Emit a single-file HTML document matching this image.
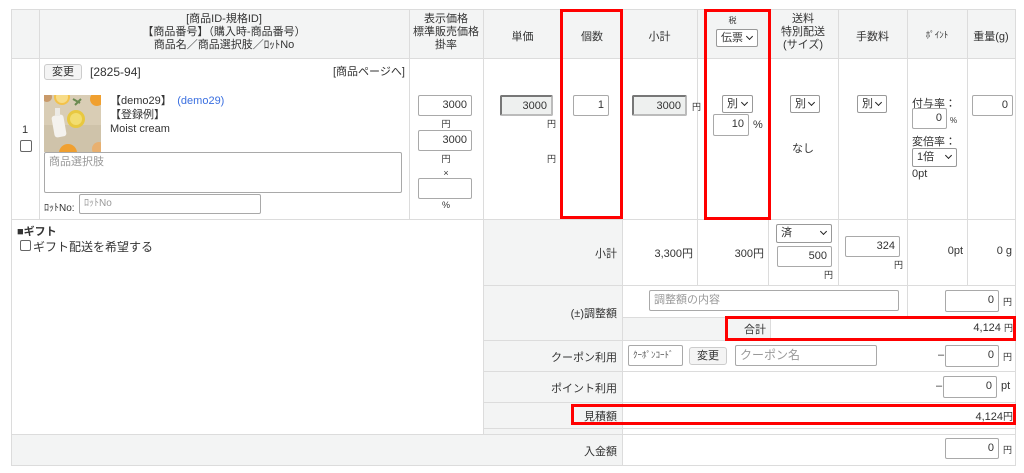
<!DOCTYPE html>
<html><head><meta charset="utf-8"><style>
*{box-sizing:border-box;margin:0;padding:0}
body{width:1024px;height:473px;background:#fff;position:relative;overflow:hidden;font-family:"Liberation Sans","Noto Sans CJK JP",sans-serif;font-size:11px;color:#333}
.a{position:absolute}
.hl{position:absolute;height:1px;background:#dcdcdc}
.vl{position:absolute;width:1px;background:#dcdcdc}
.g{position:absolute;background:#f3f4f4}
.i{position:absolute;border:1px solid #a9a9a9;border-radius:2px;background:#fff;text-align:right;padding:2px 4px 0 0;font-size:11px;line-height:14px}
.ro{background:#eef0ef;border:2px solid #777;border-right-color:#bbb;border-bottom-color:#bbb}
.s{position:absolute;border:1px solid #999;border-radius:2px;background:#fff;font-size:11px;padding:1px 0 0 4px;line-height:14px}
.s:after{content:"";position:absolute;right:5px;top:4px;width:4px;height:4px;border-right:1.5px solid #222;border-bottom:1.5px solid #222;transform:rotate(45deg)}
.ph{color:#999;text-align:left;padding-left:4px}
.c{text-align:center}
.btn{position:absolute;border:1px solid #ccc;border-radius:3px;background:#f4f4f4;text-align:center;line-height:14px;font-size:11px}
.rb{position:absolute;border:3px solid #f00}
.t{position:absolute;white-space:nowrap}
</style></head><body>
<div class="g" style="left:11px;top:9px;width:1005px;height:50px"></div>
<div class="g" style="left:483px;top:219px;width:139px;height:215px"></div>
<div class="g" style="left:622px;top:317px;width:148px;height:23px"></div>
<div class="g" style="left:11px;top:434px;width:611px;height:31px"></div>
<div class="hl" style="left:11px;top:9px;width:1005px"></div>
<div class="hl" style="left:11px;top:58px;width:1005px"></div>
<div class="hl" style="left:11px;top:219px;width:1005px"></div>
<div class="hl" style="left:483px;top:285px;width:533px"></div>
<div class="hl" style="left:622px;top:317px;width:394px"></div>
<div class="hl" style="left:483px;top:340px;width:533px"></div>
<div class="hl" style="left:483px;top:371px;width:533px"></div>
<div class="hl" style="left:483px;top:402px;width:533px"></div>
<div class="hl" style="left:483px;top:428px;width:533px"></div>
<div class="hl" style="left:11px;top:434px;width:1005px"></div>
<div class="hl" style="left:11px;top:465px;width:1005px"></div>
<div class="vl" style="left:11px;top:9px;height:457px"></div>
<div class="vl" style="left:1015px;top:9px;height:457px"></div>
<div class="vl" style="left:39px;top:9px;height:210px"></div>
<div class="vl" style="left:409px;top:9px;height:210px"></div>
<div class="vl" style="left:483px;top:9px;height:425px"></div>
<div class="vl" style="left:562px;top:9px;height:210px"></div>
<div class="vl" style="left:622px;top:9px;height:457px"></div>
<div class="vl" style="left:697px;top:9px;height:276px"></div>
<div class="vl" style="left:768px;top:9px;height:276px"></div>
<div class="vl" style="left:838px;top:9px;height:276px"></div>
<div class="vl" style="left:907px;top:9px;height:308px"></div>
<div class="vl" style="left:967px;top:9px;height:276px"></div>
<div class="vl" style="left:770px;top:317px;height:23px"></div>
<div class="t c" style="left:39px;top:13px;width:370px;line-height:13px">[商品ID-規格ID]<br>【商品番号】（購入時-商品番号）<br>商品名／商品選択肢／ﾛｯﾄNo</div>
<div class="t c" style="left:409px;top:13px;width:74px;line-height:13px">表示価格<br>標準販売価格<br>掛率</div>
<div class="t c" style="left:483px;top:28px;width:79px">単価</div>
<div class="t c" style="left:562px;top:28px;width:60px">個数</div>
<div class="t c" style="left:622px;top:28px;width:75px">小計</div>
<div class="t c" style="left:697px;top:15px;width:71px;font-size:8px">税</div>
<div class="s" style="left:716px;top:29px;width:42px;height:18px">伝票</div>
<div class="t c" style="left:768px;top:13px;width:70px;line-height:13px">送料<br>特別配送<br>(サイズ)</div>
<div class="t c" style="left:838px;top:28px;width:69px">手数料</div>
<div class="t c" style="left:907px;top:28px;width:60px;font-size:9px">ﾎﾟｲﾝﾄ</div>
<div class="t c" style="left:967px;top:28px;width:48px">重量(g)</div>
<div class="t" style="left:22px;top:124px">1</div>
<div class="a" style="left:20px;top:140px;width:12px;height:12px;border:1px solid #666;border-radius:2px"></div>
<div class="btn" style="left:44px;top:64px;width:38px;height:16px">変更</div>
<div class="t" style="left:90px;top:65px;font-size:12px">[2825-94]</div>
<div class="t" style="left:333px;top:63px">[商品ページへ]</div>
<svg class="a" style="left:44px;top:95px" width="57" height="57" viewBox="0 0 57 57">
<rect width="57" height="57" fill="#d9cdb5"/>
<rect x="0" y="30" width="57" height="27" fill="#cfc3aa"/>
<circle cx="18" cy="2" r="8" fill="#f3c24a"/><circle cx="18" cy="2" r="6" fill="#f7dc88"/>
<circle cx="53" cy="4" r="7" fill="#f0a030"/>
<circle cx="3" cy="2" r="5" fill="#c99a6a"/>
<circle cx="32" cy="24" r="9" fill="#e8c840"/><circle cx="32" cy="24" r="6" fill="#f2dd70"/>
<rect x="9" y="20" width="12" height="22" rx="3" fill="#f4f2ee" transform="rotate(-10 15 31)"/>
<rect x="11" y="13" width="5" height="8" fill="#eceae5"/>
<circle cx="24" cy="58" r="9" fill="#f0a030"/>
<circle cx="55" cy="54" r="7" fill="#e8b070"/>
<path d="M29 4 L36 8 M31 10 L37 4" stroke="#6b8a50" stroke-width="2"/>
</svg>
<div class="t" style="left:110px;top:94px;line-height:14px">【demo29】　<span style="color:#3a6fe0">(demo29)</span><br>【登録例】<br>Moist cream</div>
<div class="i ph" style="left:44px;top:152px;width:358px;height:41px;color:#999">商品選択肢</div>
<div class="t" style="left:44px;top:199px;font-size:10px">ﾛｯﾄNo:</div>
<div class="i ph" style="left:79px;top:194px;width:182px;height:20px;font-size:10px">ﾛｯﾄNo</div>
<div class="i" style="left:418px;top:95px;width:54px;height:21px">3000</div>
<div class="t c" style="left:409px;top:117px;width:74px;font-size:9px">円</div>
<div class="i" style="left:418px;top:130px;width:54px;height:21px">3000</div>
<div class="t c" style="left:409px;top:152px;width:74px;font-size:9px;line-height:14px">円<br>×</div>
<div class="i" style="left:418px;top:178px;width:54px;height:21px"></div>
<div class="t c" style="left:409px;top:200px;width:74px;font-size:9px">%</div>
<div class="i ro" style="left:500px;top:95px;width:53px;height:21px">3000</div>
<div class="t" style="left:547px;top:117px;font-size:9px">円</div>
<div class="t" style="left:547px;top:152px;font-size:9px">円</div>
<div class="i" style="left:573px;top:95px;width:36px;height:21px">1</div>
<div class="i ro" style="left:632px;top:95px;width:55px;height:21px">3000</div>
<div class="t" style="left:692px;top:100px;font-size:9px">円</div>
<div class="s" style="left:722px;top:95px;width:31px;height:18px">別</div>
<div class="i" style="left:713px;top:114px;width:36px;height:22px">10</div>
<div class="t" style="left:753px;top:119px">%</div>
<div class="s" style="left:790px;top:95px;width:30px;height:18px">別</div>
<div class="t c" style="left:768px;top:140px;width:70px">なし</div>
<div class="s" style="left:857px;top:95px;width:30px;height:18px">別</div>
<div class="t" style="left:912px;top:95px">付与率：</div>
<div class="i" style="left:912px;top:108px;width:35px;height:21px">0</div>
<div class="t" style="left:950px;top:116px;font-size:8px">%</div>
<div class="t" style="left:912px;top:133px">変倍率：</div>
<div class="s" style="left:912px;top:148px;width:45px;height:19px">1倍</div>
<div class="t" style="left:912px;top:168px">0pt</div>
<div class="i" style="left:972px;top:95px;width:41px;height:21px">0</div>
<div class="rb" style="left:560px;top:9px;width:63px;height:210px"></div>
<div class="rb" style="left:704px;top:9px;width:67px;height:211px"></div>
<div class="t" style="left:17px;top:223px;font-weight:bold">■ギフト</div>
<div class="a" style="left:20px;top:240px;width:11px;height:11px;border:1px solid #666;border-radius:2px"></div>
<div class="t" style="left:33px;top:238px;font-size:12px">ギフト配送を希望する</div>
<div class="t" style="left:483px;top:245px;width:134px;text-align:right">小計</div>
<div class="t" style="left:622px;top:245px;width:71px;text-align:right">3,300円</div>
<div class="t" style="left:697px;top:245px;width:67px;text-align:right">300円</div>
<div class="s" style="left:776px;top:224px;width:56px;height:19px">済</div>
<div class="i" style="left:777px;top:246px;width:55px;height:21px">500</div>
<div class="t" style="left:824px;top:268px;font-size:9px">円</div>
<div class="i" style="left:845px;top:236px;width:55px;height:21px">324</div>
<div class="t" style="left:894px;top:258px;font-size:9px">円</div>
<div class="t" style="left:907px;top:245px;width:56px;text-align:right">0pt</div>
<div class="t" style="left:967px;top:245px;width:45px;text-align:right">0 g</div>
<div class="t" style="left:483px;top:305px;width:134px;text-align:right">(±)調整額</div>
<div class="i ph" style="left:649px;top:290px;width:250px;height:21px">調整額の内容</div>
<div class="i" style="left:945px;top:290px;width:54px;height:22px">0</div>
<div class="t" style="left:1003px;top:295px;font-size:9px">円</div>
<div class="t" style="left:622px;top:321px;width:144px;text-align:right">合計</div>
<div class="t" style="left:770px;top:321px;width:243px;text-align:right">4,124 <span style="font-size:9px">円</span></div>
<div class="rb" style="left:725px;top:316px;width:291px;height:25px"></div>
<div class="t" style="left:483px;top:349px;width:134px;text-align:right">クーポン利用</div>
<div class="i ph" style="left:628px;top:345px;width:55px;height:21px;font-size:9px;color:#555">ｸｰﾎﾟﾝｺｰﾄﾞ</div>
<div class="btn" style="left:689px;top:347px;width:38px;height:18px;line-height:16px">変更</div>
<div class="i ph" style="left:735px;top:345px;width:142px;height:21px;font-size:12px">クーポン名</div>
<div class="t" style="left:938px;top:349px">–</div>
<div class="i" style="left:945px;top:345px;width:54px;height:22px">0</div>
<div class="t" style="left:1003px;top:350px;font-size:9px">円</div>
<div class="t" style="left:483px;top:380px;width:134px;text-align:right">ポイント利用</div>
<div class="t" style="left:936px;top:380px">–</div>
<div class="i" style="left:943px;top:376px;width:54px;height:22px">0</div>
<div class="t" style="left:1001px;top:380px">pt</div>
<div class="t" style="left:483px;top:408px;width:134px;text-align:right">見積額</div>
<div class="t" style="left:622px;top:408px;width:391px;text-align:right">4,124<span style="font-size:10px">円</span></div>
<div class="rb" style="left:571px;top:404px;width:445px;height:21px"></div>
<div class="t" style="left:11px;top:443px;width:606px;text-align:right">入金額</div>
<div class="i" style="left:945px;top:438px;width:54px;height:21px">0</div>
<div class="t" style="left:1003px;top:443px;font-size:9px">円</div>
</body></html>
